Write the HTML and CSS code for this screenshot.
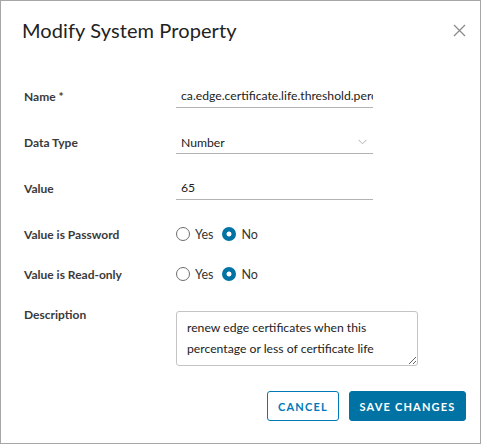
FILE: index.html
```html
<!DOCTYPE html>
<html lang="en">
<head>
<meta charset="utf-8">
<title>Modify System Property</title>
<link rel="stylesheet" href="styles.css">
</head>
<body>
<div class="dialog">
  <div class="header">
    <h1 class="title">Modify System Property</h1>
    <button class="close" aria-label="Close">
      <svg width="13" height="13" viewBox="0 0 13 13"><path d="M1 1 L12 12 M12 1 L1 12" stroke="#8c8c8c" stroke-width="1.3" fill="none"/></svg>
    </button>
  </div>
  <div class="form">
    <div class="row row-input">
      <label class="label">Name *</label>
      <div class="field"><input class="text-input" type="text" value="ca.edge.certificate.life.threshold.percent"></div>
    </div>
    <div class="row row-input">
      <label class="label">Data Type</label>
      <div class="field">
        <div class="select">
          <span>Number</span>
          <svg class="chevron" width="9" height="6" viewBox="0 0 9 6"><path d="M0.5 0.8 L4.5 4.8 L8.5 0.8" stroke="#b0b0b0" stroke-width="1" fill="none"/></svg>
        </div>
      </div>
    </div>
    <div class="row row-input">
      <label class="label">Value</label>
      <div class="field"><input class="text-input" type="text" value="65"></div>
    </div>
    <div class="row row-radio first-radio">
      <label class="label">Value is Password</label>
      <div class="radios">
        <span class="radio"><span class="dot"></span>Yes</span>
        <span class="radio"><span class="dot checked"></span>No</span>
      </div>
    </div>
    <div class="row row-radio second-radio">
      <label class="label">Value is Read-only</label>
      <div class="radios">
        <span class="radio"><span class="dot"></span>Yes</span>
        <span class="radio"><span class="dot checked"></span>No</span>
      </div>
    </div>
    <div class="row row-desc">
      <label class="label">Description</label>
      <textarea class="textarea">renew edge certificates when this percentage or less of certificate life remains</textarea>
    </div>
  </div>
  <div class="footer">
    <button class="btn btn-outline">CANCEL</button>
    <button class="btn btn-primary">SAVE CHANGES</button>
  </div>
</div>
</body>
</html>
```
FILE: styles.css
```css
* { box-sizing: border-box; }
html, body { margin: 0; padding: 0; background: #fff; }
body { font-family: "Lato", "Open Sans", sans-serif; color: #333; }

.dialog {
  width: 481px;
  height: 444px;
  border: 1px solid #a6a6a6;
  background: #fff;
  display: flex;
  flex-direction: column;
}

.header {
  display: flex;
  justify-content: space-between;
  align-items: center;
  padding: 16px 14px 0 21px;
  height: 42px;
}
.title {
  margin: 0;
  font-weight: 400;
  font-size: 20px;
  color: #222;
  letter-spacing: 0.1px;
}
.close {
  border: 0;
  background: none;
  padding: 0;
  width: 13px;
  height: 13px;
  display: flex;
}

.form {
  display: flex;
  flex-direction: column;
  padding-left: 23px;
  margin-top: 41px;
}
.row {
  display: grid;
  grid-template-columns: 152px 197px;
  align-items: center;
}
.label {
  font-size: 12px;
  font-weight: 700;
  color: #3a3a3a;
}
.row-input { height: 24px; margin-bottom: 22px; }
.row-radio { height: 24px; }
.first-radio { margin-bottom: 16px; }
.second-radio { margin-bottom: 25px; }
.row-desc { align-items: start; grid-template-columns: 152px 242px; }
.row-desc .label { line-height: 10px; margin-top: -1px; }

.field { height: 24px; }
.text-input {
  width: 197px;
  height: 24px;
  border: 0;
  border-bottom: 1px solid #b3b3b3;
  padding: 0 0 0 5px;
  font-family: inherit;
  font-size: 12.2px;
  color: #222;
  outline: none;
  background: transparent;
}
.select {
  height: 24px;
  border-bottom: 1px solid #b3b3b3;
  display: flex;
  align-items: center;
  justify-content: space-between;
  padding: 1px 6px 0 5px;
  font-size: 12.2px;
  color: #222;
}

.radios { display: flex; align-items: center; gap: 9px; font-size: 12.5px; color: #333; }
.radio { display: flex; align-items: center; gap: 5px; }
.dot {
  width: 14px;
  height: 14px;
  border-radius: 50%;
  border: 1px solid #6e6e6e;
  background: #fff;
  display: inline-block;
}
.dot.checked {
  border: 0;
  background: radial-gradient(circle, #fff 0 2.2px, #0072a3 2.8px);
}

.textarea {
  width: 242px;
  height: 55px;
  border: 1px solid #c4c4c4;
  border-radius: 3px;
  padding: 5px 10px;
  font-family: inherit;
  font-size: 12.2px;
  line-height: 21px;
  color: #222;
  resize: vertical;
  overflow: hidden;
}

.footer {
  display: flex;
  justify-content: flex-end;
  gap: 10px;
  padding-right: 14px;
  margin-top: 25px;
}
.btn {
  height: 30px;
  border-radius: 3px;
  font-family: inherit;
  font-size: 11px;
  font-weight: 700;
  letter-spacing: 1.2px;
  padding: 0;
  white-space: nowrap;
}
.btn-outline {
  width: 72px;
  border: 1px solid #0079b8;
  background: #fff;
  color: #0079b8;
}
.btn-primary {
  width: 117px;
  border: 1px solid #0072a3;
  background: #0072a3;
  color: #fff;
}
```
